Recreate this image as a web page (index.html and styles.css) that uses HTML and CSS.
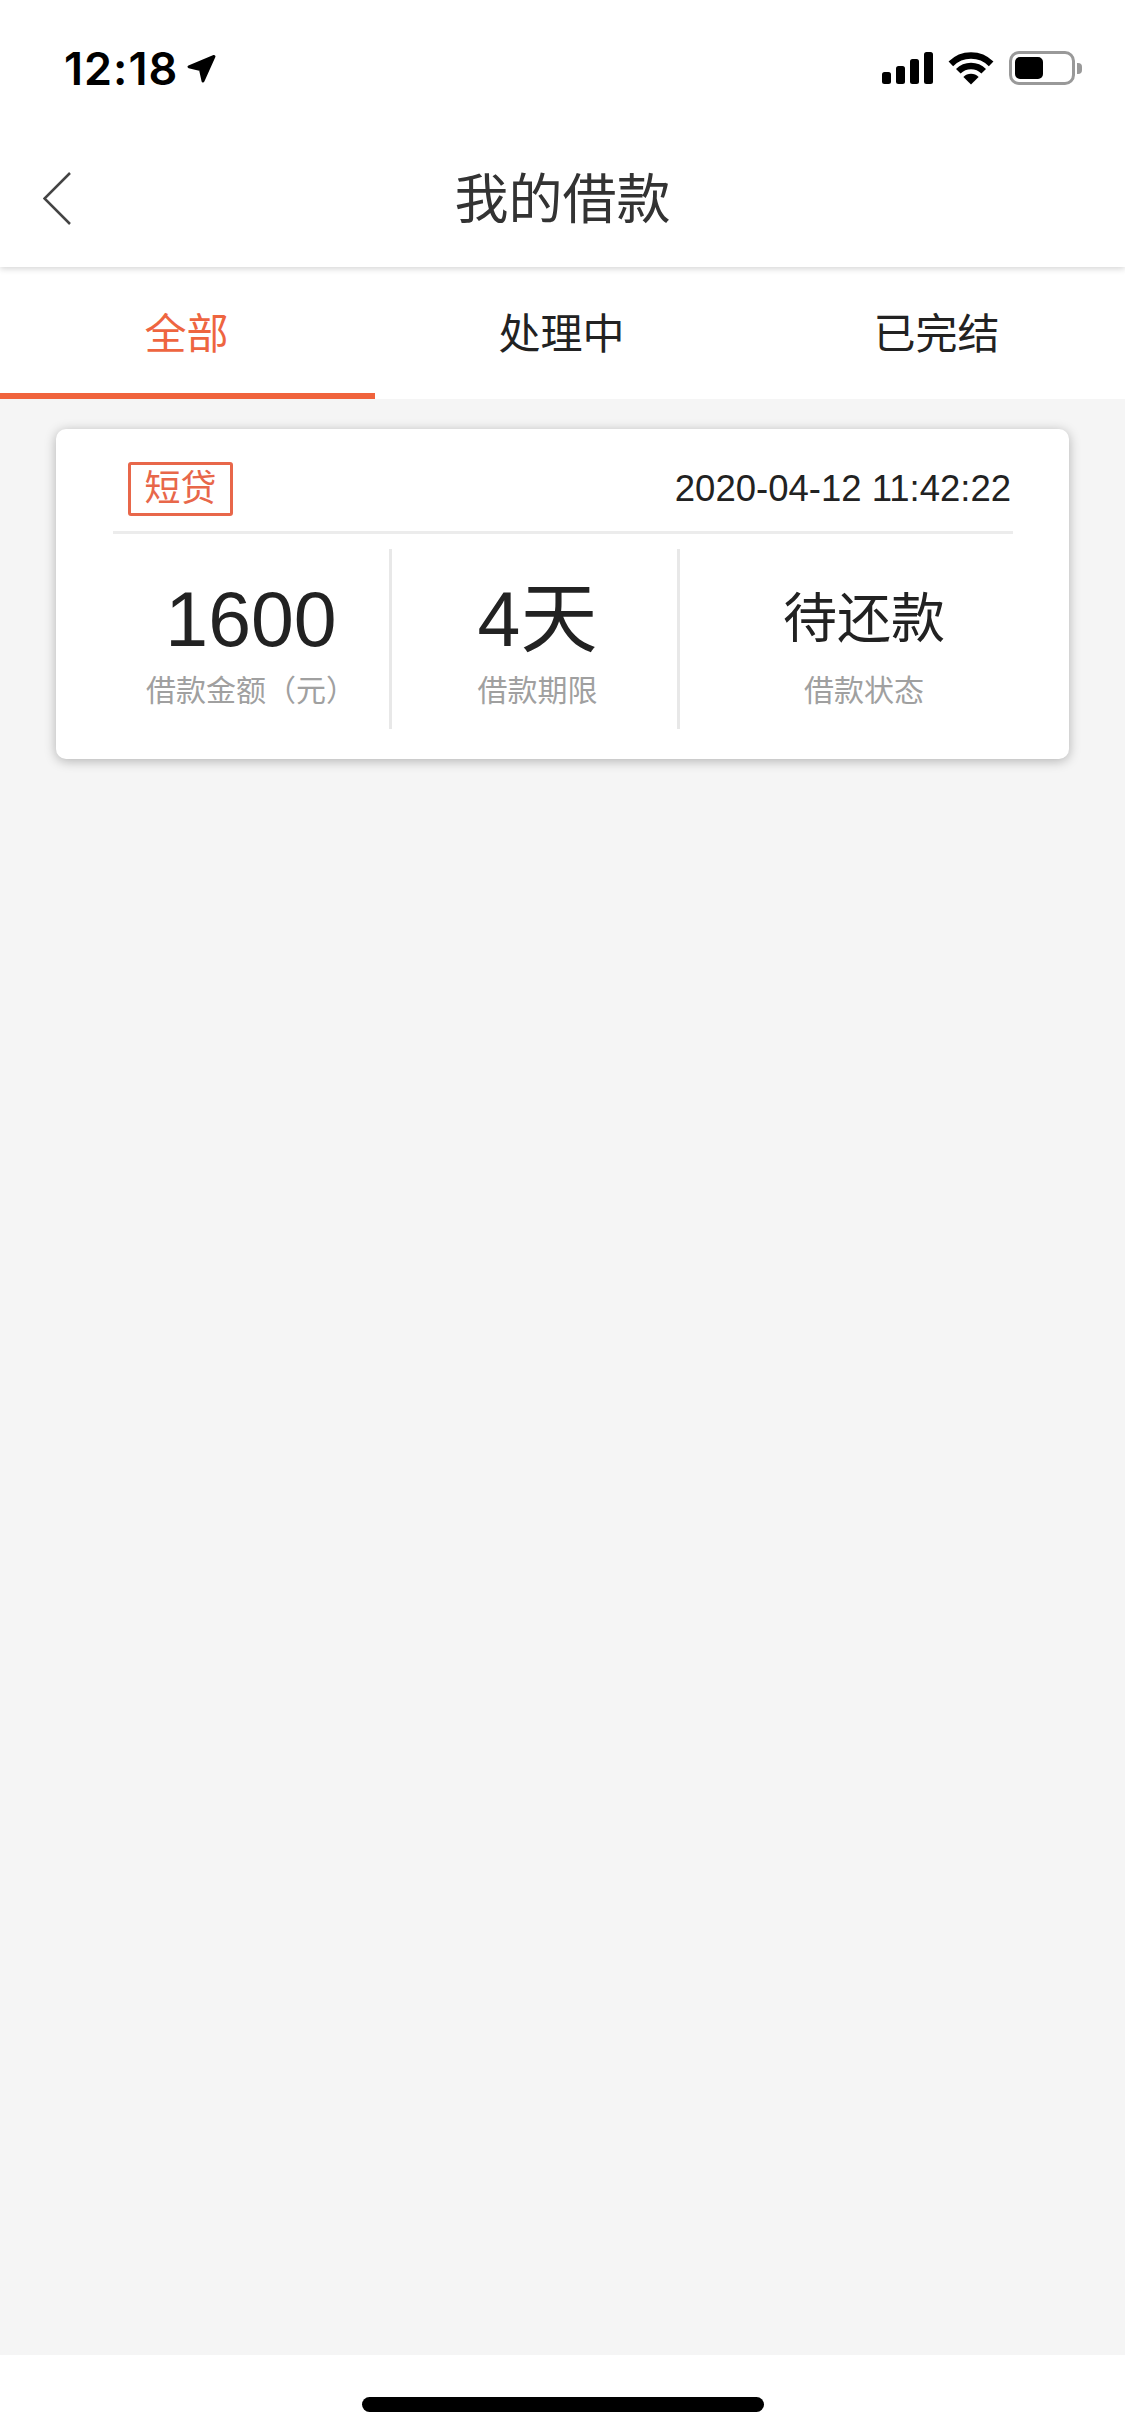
FILE: index.html
```html
<!DOCTYPE html>
<html lang="zh-CN">
<head>
  <meta charset="UTF-8" />
  <title>我的借款</title>
  <link rel="stylesheet" href="styles.css">
</head>
<body>
  <div class="phone">
    <div class="status-bar">
      <div class="status-left">
        <span class="clock">12:18</span>
        <svg class="arrow-icon" width="29" height="29" viewBox="0 0 29 29">
          <path d="M27 2.5 L2 12.8 L13.5 15.5 L16 27 Z" fill="#000" stroke="#000" stroke-width="3" stroke-linejoin="round"/>
        </svg>
      </div>
      <div class="status-right">
        <svg width="51" height="32" viewBox="0 0 51 32">
          <rect x="0" y="20" width="9" height="12" rx="2.5"/>
          <rect x="14" y="14" width="9" height="18" rx="2.5"/>
          <rect x="28" y="7" width="9" height="25" rx="2.5"/>
          <rect x="42" y="0" width="9" height="32" rx="2.5"/>
        </svg>
        <svg width="46" height="33" viewBox="0 0 46 33">
          <path d="M2.85 11.85 A28.5 28.5 0 0 1 43.15 11.85" fill="none" stroke="#000" stroke-width="6.5"/>
          <path d="M10.3 19.3 A18 18 0 0 1 35.7 19.3" fill="none" stroke="#000" stroke-width="6.5"/>
          <path d="M23 32.5 L15.4 24.9 A10.8 10.8 0 0 1 30.6 24.9 Z"/>
        </svg>
        <div class="battery">
          <div class="battery-body"><div class="battery-level"></div></div>
          <div class="battery-nub"></div>
        </div>
      </div>
    </div>

    <header class="nav">
      <svg class="back" width="28" height="53" viewBox="0 0 28 53">
        <polyline points="27,1 1.5,26.5 27,52" fill="none" stroke="#444" stroke-width="2.5"/>
      </svg>
      <h1 class="nav-title">我的借款</h1>
    </header>

    <nav class="tabs">
      <a class="tab active">全部</a>
      <a class="tab">处理中</a>
      <a class="tab">已完结</a>
    </nav>

    <main class="content">
      <section class="card">
        <div class="card-head">
          <span class="tag">短贷</span>
          <span class="date">2020-04-12 11:42:22</span>
        </div>
        <div class="stats">
          <div class="stat">
            <div class="stat-value">1600</div>
            <div class="stat-label">借款金额（元）</div>
          </div>
          <div class="stat">
            <div class="stat-value">4天</div>
            <div class="stat-label">借款期限</div>
          </div>
          <div class="stat">
            <div class="stat-value small">待还款</div>
            <div class="stat-label">借款状态</div>
          </div>
        </div>
      </section>
    </main>

    <footer class="home-bar">
      <div class="home-indicator"></div>
    </footer>
  </div>
</body>
</html>
```

FILE: styles.css
```css
html, body {
  margin: 0;
  padding: 0;
}

body {
  background: #fff;
  font-family: "Liberation Sans", "Noto Sans CJK SC", sans-serif;
}

.phone {
  width: 1125px;
  height: 2436px;
  display: flex;
  flex-direction: column;
  overflow: hidden;
}

/* status bar */
.status-bar {
  position: relative;
  z-index: 2;
  height: 110px;
  box-sizing: border-box;
  padding: 26px 43px 0 64px;
  background: #fff;
  display: flex;
  align-items: center;
  justify-content: space-between;
}

.status-left {
  display: flex;
  align-items: center;
  gap: 9px;
}

.clock {
  font-family: Inter, sans-serif;
  font-size: 45px;
  font-weight: 600;
  letter-spacing: 1px;
  color: #000;
}

.status-right {
  display: flex;
  align-items: center;
  gap: 15px;
}

.battery {
  display: flex;
  align-items: center;
  gap: 2px;
}

.battery-body {
  width: 66px;
  height: 34px;
  box-sizing: border-box;
  border: 3px solid #999;
  border-radius: 10px;
  padding: 3px;
}

.battery-level {
  width: 28px;
  height: 100%;
  background: #000;
  border-radius: 5px;
}

.battery-nub {
  width: 5px;
  height: 11px;
  background: #999;
  border-radius: 0 4px 4px 0;
}

/* nav */
.nav {
  position: relative;
  z-index: 1;
  height: 157px;
  box-sizing: border-box;
  padding: 23px 43px 0;
  background: #fff;
  display: grid;
  grid-template-columns: 1fr auto 1fr;
  align-items: start;
  box-shadow: 0 2px 6px rgba(0,0,0,0.16);
}

.back {
  margin-top: 39px;
}

.nav-title {
  margin: 0;
  font-size: 54px;
  line-height: 135px;
  font-weight: 400;
  color: #333;
}

/* tabs */
.tabs {
  height: 132px;
  background: #fff;
  display: grid;
  grid-template-columns: repeat(3, 1fr);
}

.tab {
  height: 132px;
  box-sizing: border-box;
  padding: 5px 2px 0 0;
  font-size: 42px;
  line-height: 126px;
  text-align: center;
  color: #222;
}

.tab.active {
  color: #ee6540;
  border-bottom: 6px solid #f0633c;
}

/* list */
.content {
  flex: 1;
  background: #f5f5f5;
  padding: 30px 56px 0;
}

.card {
  background: #fff;
  border-radius: 10px;
  box-shadow: 0 2px 12px rgba(0,0,0,0.28);
  padding: 0 0 30px 57px;
}

.card-head {
  width: 900px;
  box-sizing: border-box;
  padding: 33px 2px 15px 15px;
  border-bottom: 3px solid #ececec;
  display: flex;
  align-items: center;
  justify-content: space-between;
}

.tag {
  width: 105px;
  height: 54px;
  box-sizing: border-box;
  border: 3px solid #e8674a;
  border-radius: 3px;
  font-size: 36px;
  line-height: 48px;
  text-align: center;
  color: #e8674a;
}

.date {
  font-size: 36.5px;
  color: #222;
}

.stats {
  margin-top: 15px;
  width: 935px;
  height: 180px;
  display: grid;
  grid-template-columns: 279px 288px 368px;
}

.stat {
  box-sizing: border-box;
  padding-top: 25px;
  border-right: 3px solid #e8e8e8;
  text-align: center;
}

.stat:nth-child(2) {
  padding-left: 6px;
}

.stat:last-child {
  border-right: none;
}

.stat-value {
  font-size: 77px;
  line-height: 90px;
  color: #222;
}

.stat-value.small {
  font-size: 54px;
}

.stat-label {
  margin-top: 7px;
  font-size: 30px;
  line-height: 40px;
  color: #a0a0a0;
}

/* home indicator */
.home-bar {
  height: 81px;
  box-sizing: border-box;
  padding-top: 42px;
  background: #fff;
}

.home-indicator {
  width: 402px;
  height: 15px;
  margin: 0 auto;
  background: #000;
  border-radius: 8px;
}
```
